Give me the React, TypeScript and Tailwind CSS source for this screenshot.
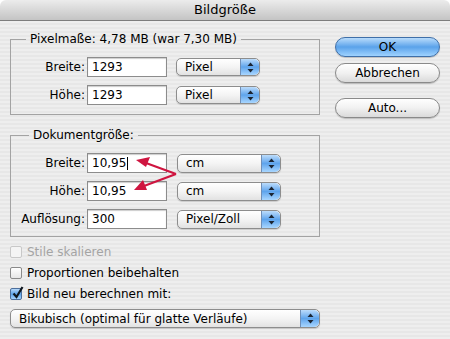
import React from "react";

const font = "font-['DejaVu_Sans',sans-serif]";

const Stepper: React.FC = () => (
  <div className="flex h-full w-[19px] items-center justify-center rounded-r-[5px] border-l border-[#6f8fb8] bg-gradient-to-b from-[#bcdcfb] via-[#5ea4ec] to-[#a8d6ff]">
    <svg width="7" height="11" viewBox="0 0 7 11">
      <path d="M3.5 0.5 L6.5 4 L0.5 4 Z" fill="#1b2533" />
      <path d="M3.5 10.5 L6.5 7 L0.5 7 Z" fill="#1b2533" />
    </svg>
  </div>
);

const Select: React.FC<{ label: string; className: string }> = ({ label, className }) => (
  <div
    className={`flex items-center overflow-hidden rounded-[5px] border border-[#8d8d8d] bg-gradient-to-b from-[#ffffff] via-[#f4f4f4] to-[#e2e2e2] shadow-[0_1px_1px_rgba(0,0,0,0.15)] ${className}`}
  >
    <span className="flex-1 pl-[8px] text-[12px] leading-none text-black">{label}</span>
    <Stepper />
  </div>
);

const Field: React.FC<{ value: string; caret?: boolean }> = ({ value, caret }) => (
  <div className="flex h-[20px] w-[80px] items-center border border-[#8c8c8c] bg-white pl-[4px] text-[12px] shadow-[inset_0_1px_1px_rgba(0,0,0,0.2)]">
    {value}
    {caret && <span className="ml-[1px] h-[13px] w-px bg-black" />}
  </div>
);

const Row: React.FC<{ label: string; value: string; unit: string; wide?: boolean; caret?: boolean }> = ({
  label,
  value,
  unit,
  wide,
  caret,
}) => (
  <div className="flex h-[20px] items-center">
    <span className="w-[76px] pr-[2px] text-right text-[12px]">{label}</span>
    <Field value={value} caret={caret} />
    <Select label={unit} className={wide ? "ml-[10px] h-[19px] w-[104px]" : "ml-[9px] h-[18px] w-[84px]"} />
  </div>
);

const Button: React.FC<{ label: string; primary?: boolean; className?: string }> = ({ label, primary, className }) => (
  <div
    className={`flex h-[20px] w-[105px] items-center justify-center rounded-full border text-[12px] ${
      primary
        ? "border-[#3f6fa8] bg-gradient-to-b from-[#b9dcfb] via-[#5aa2ea] to-[#9fd3ff]"
        : "border-[#8a8a8a] bg-gradient-to-b from-[#ffffff] via-[#f1f1f1] to-[#dadada]"
    } shadow-[0_1px_1px_rgba(0,0,0,0.2)] ${className ?? ""}`}
  >
    {label}
  </div>
);

const Check: React.FC<{ label: string; checked?: boolean; disabled?: boolean }> = ({ label, checked, disabled }) => (
  <div className="flex h-[21px] items-center">
    <div
      className={`relative h-[12px] w-[12px] rounded-[2px] border ${
        checked
          ? "border-[#4d6f9c] bg-gradient-to-b from-[#b5d8fa] via-[#5aa2ea] to-[#a5d4ff]"
          : disabled
          ? "border-[#c8c8c8] bg-[#f4f4f4]"
          : "border-[#8a8a8a] bg-gradient-to-b from-white to-[#e6e6e6]"
      }`}
    >
      {checked && (
        <svg className="absolute -top-[3px] left-[1px]" width="12" height="13" viewBox="0 0 12 13">
          <path d="M1.5 7.5 L4.5 11 L10.5 1" stroke="#101820" strokeWidth="2.2" fill="none" />
        </svg>
      )}
    </div>
    <span className={`ml-[5px] text-[12px] ${disabled ? "text-[#a4a4a4]" : "text-black"}`}>{label}</span>
  </div>
);

export default function App() {
  return (
    <div className={`relative h-[339px] w-[450px] overflow-hidden bg-white text-black ${font}`}>
      <div className="flex h-[21px] items-center justify-center rounded-t-[6px] border-b border-[#7d7d7d] bg-gradient-to-b from-[#ececec] to-[#c4c4c4] text-[13px]">
        Bildgröße
      </div>
      <div className="flex h-[318px] bg-[repeating-linear-gradient(to_bottom,#eeeeee_0px,#eeeeee_2px,#e7e7e7_2px,#e7e7e7_4px)] px-[10px]">
        <div className="w-[310px]">
          <fieldset className="mt-[10px] border border-[#a3a3a3] px-0 pb-[9px]">
            <legend className="ml-[15px] px-[4px] text-[12px] leading-[16px]">Pixelmaße: 4,78 MB (war 7,30 MB)</legend>
            <div className="mt-[10px] flex flex-col gap-[8px]">
              <Row label="Breite:" value="1293" unit="Pixel" />
              <Row label="Höhe:" value="1293" unit="Pixel" />
            </div>
          </fieldset>
          <fieldset className="mt-[12px] border border-[#a3a3a3] px-0 pb-[7px]">
            <legend className="ml-[18px] px-[4px] text-[12px] leading-[16px]">Dokumentgröße:</legend>
            <div className="mt-[10px] flex flex-col gap-[8px]">
              <Row label="Breite:" value="10,95" unit="cm" wide caret />
              <Row label="Höhe:" value="10,95" unit="cm" wide />
              <Row label="Auflösung:" value="300" unit="Pixel/Zoll" wide />
            </div>
          </fieldset>
          <div className="mt-[4px] flex flex-col">
            <Check label="Stile skalieren" disabled />
            <Check label="Proportionen beibehalten" />
            <Check label="Bild neu berechnen mit:" checked />
          </div>
          <Select label="Bikubisch (optimal für glatte Verläufe)" className="mt-[5px] h-[19px] w-[310px]" />
        </div>
        <div className="ml-[15px] mt-[16px] flex flex-col">
          <Button label="OK" primary />
          <Button label="Abbrechen" className="mt-[6px]" />
          <Button label="Auto..." className="mt-[15px]" />
        </div>
      </div>
      <svg className="pointer-events-none absolute left-0 top-0" width="450" height="339">
        <path d="M176 174 L146 163" stroke="#cf1540" strokeWidth="2.2" fill="none" />
        <path d="M176 174 L144 186" stroke="#cf1540" strokeWidth="2.2" fill="none" />
        <path d="M136 160 L150 157 L146 167 Z" fill="#cf1540" />
        <path d="M134 190 L143 180 L147 190 Z" fill="#cf1540" />
      </svg>
    </div>
  );
}
